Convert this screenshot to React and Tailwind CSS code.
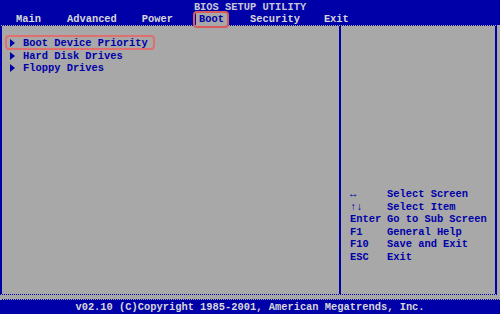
import React from 'react';

const menu = [
  ['Main', 'ml-[16px]'],
  ['Advanced', 'ml-[26px]'],
  ['Power', 'ml-[25px]'],
  ['Boot', 'ml-[23px]'],
  ['Security', 'ml-[26px]'],
  ['Exit', 'ml-[24px]'],
];

const items = ['Boot Device Priority', 'Hard Disk Drives', 'Floppy Drives'];

const help = [
  ['↔', 'Select Screen'],
  ['↑↓', 'Select Item'],
  ['Enter', 'Go to Sub Screen'],
  ['F1', 'General Help'],
  ['F10', 'Save and Exit'],
  ['ESC', 'Exit'],
];

function Arrow() {
  return (
    <svg width="5" height="8" viewBox="0 0 5 8" className="shrink-0">
      <path d="M0 0 L5 4 L0 8 Z" fill="#0000a8" />
    </svg>
  );
}

export default function App() {
  return (
    <div
      className="w-[500px] h-[314px] flex flex-col bg-[#a8a8a8] overflow-hidden text-[10.4px] font-bold"
      style={{ fontFamily: '"Liberation Mono", "DejaVu Sans Mono", monospace' }}
    >
      {/* header */}
      <div className="h-[25px] bg-[#0000a8] text-[#d8d8d8] shrink-0">
        <div className="pt-[2px] h-[13px] leading-[11px] text-center text-[#c8c8d8]">BIOS SETUP UTILITY</div>
        <div className="h-[12px] leading-[12px] flex">
          {menu.map(([m, ml]) =>
            m === 'Boot' ? (
              <span key={m} className={`${ml} -mr-[3px] relative px-[3px] bg-[#a8a8a8] text-[#0000a8] h-[13px]`}>
                {m}
                <span className="absolute -left-[3px] -right-[2px] -top-[2px] -bottom-[2px] border-2 border-[#d85a5a] rounded-[4px]" />
              </span>
            ) : (
              <span key={m} className={ml}>{m}</span>
            )
          )}
        </div>
      </div>

      {/* panels */}
      <div className="h-[270px] w-[497px] flex shrink-0 border-l-2 border-r-2 border-y border-[#0000a8] [border-top-style:dotted] [border-bottom-style:dotted] text-[#0000a8]">
        <div className="w-[339px] border-r-2 border-[#0000a8] pt-[11px] pl-[8px]">
          {items.map((it, i) => (
            <div key={it} className="relative flex items-center h-[12.5px] leading-[12.5px]">
              <Arrow />
              <span className="ml-[8px]">{it}</span>
              {i === 0 && (
                <span className="absolute -left-[5px] w-[150px] -top-[2px] h-[15px] border-2 border-[#e07070] rounded-[4px]" />
              )}
            </div>
          ))}
        </div>
        <div className="flex-1 pt-[162px] pl-[9px]">
          {help.map(([k, v]) => (
            <div key={k} className="flex h-[12.5px] leading-[12.5px]">
              <span className="w-[37px]">{k}</span>
              <span>{v}</span>
            </div>
          ))}
        </div>
      </div>

      {/* footer */}
      <div className="mt-[4px] h-[15px] bg-[#0000a8] border-t border-dotted border-[#a8a8a8] text-[#d8d8d8] text-center leading-[14px]">
        v02.10 (C)Copyright 1985-2001, American Megatrends, Inc.
      </div>
    </div>
  );
}
